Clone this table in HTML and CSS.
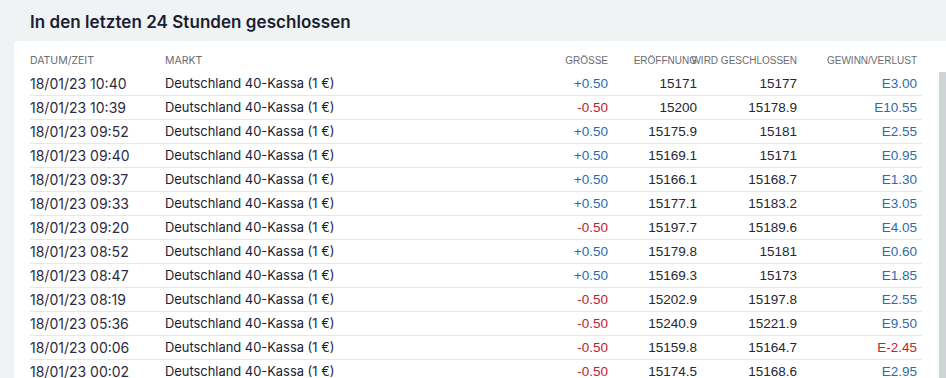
FILE: index.html
```html
<!DOCTYPE html>
<html lang="de">
<head>
<meta charset="utf-8">
<title>In den letzten 24 Stunden geschlossen</title>
<link rel="stylesheet" href="styles.css">
</head>
<body>
<h1 class="title">In den letzten 24 Stunden geschlossen</h1>
<section class="card">
  <div class="table">
    <div class="row head">
      <div class="cell text">DATUM/ZEIT</div>
      <div class="cell text">MARKT</div>
      <div class="cell num">GRÖSSE</div>
      <div class="cell num">ERÖFFNUNG</div>
      <div class="cell num">WIRD GESCHLOSSEN</div>
      <div class="cell num">GEWINN/VERLUST</div>
    </div>
    <div class="row"><div class="cell date">18/01/23 10:40</div><div class="cell market">Deutschland 40-Kassa (1 €)</div><div class="cell num pos">+0.50</div><div class="cell num">15171</div><div class="cell num">15177</div><div class="cell num pos">E3.00</div></div>
    <div class="row"><div class="cell date">18/01/23 10:39</div><div class="cell market">Deutschland 40-Kassa (1 €)</div><div class="cell num neg">-0.50</div><div class="cell num">15200</div><div class="cell num">15178.9</div><div class="cell num pos">E10.55</div></div>
    <div class="row"><div class="cell date">18/01/23 09:52</div><div class="cell market">Deutschland 40-Kassa (1 €)</div><div class="cell num pos">+0.50</div><div class="cell num">15175.9</div><div class="cell num">15181</div><div class="cell num pos">E2.55</div></div>
    <div class="row"><div class="cell date">18/01/23 09:40</div><div class="cell market">Deutschland 40-Kassa (1 €)</div><div class="cell num pos">+0.50</div><div class="cell num">15169.1</div><div class="cell num">15171</div><div class="cell num pos">E0.95</div></div>
    <div class="row"><div class="cell date">18/01/23 09:37</div><div class="cell market">Deutschland 40-Kassa (1 €)</div><div class="cell num pos">+0.50</div><div class="cell num">15166.1</div><div class="cell num">15168.7</div><div class="cell num pos">E1.30</div></div>
    <div class="row"><div class="cell date">18/01/23 09:33</div><div class="cell market">Deutschland 40-Kassa (1 €)</div><div class="cell num pos">+0.50</div><div class="cell num">15177.1</div><div class="cell num">15183.2</div><div class="cell num pos">E3.05</div></div>
    <div class="row"><div class="cell date">18/01/23 09:20</div><div class="cell market">Deutschland 40-Kassa (1 €)</div><div class="cell num neg">-0.50</div><div class="cell num">15197.7</div><div class="cell num">15189.6</div><div class="cell num pos">E4.05</div></div>
    <div class="row"><div class="cell date">18/01/23 08:52</div><div class="cell market">Deutschland 40-Kassa (1 €)</div><div class="cell num pos">+0.50</div><div class="cell num">15179.8</div><div class="cell num">15181</div><div class="cell num pos">E0.60</div></div>
    <div class="row"><div class="cell date">18/01/23 08:47</div><div class="cell market">Deutschland 40-Kassa (1 €)</div><div class="cell num pos">+0.50</div><div class="cell num">15169.3</div><div class="cell num">15173</div><div class="cell num pos">E1.85</div></div>
    <div class="row"><div class="cell date">18/01/23 08:19</div><div class="cell market">Deutschland 40-Kassa (1 €)</div><div class="cell num neg">-0.50</div><div class="cell num">15202.9</div><div class="cell num">15197.8</div><div class="cell num pos">E2.55</div></div>
    <div class="row"><div class="cell date">18/01/23 05:36</div><div class="cell market">Deutschland 40-Kassa (1 €)</div><div class="cell num neg">-0.50</div><div class="cell num">15240.9</div><div class="cell num">15221.9</div><div class="cell num pos">E9.50</div></div>
    <div class="row"><div class="cell date">18/01/23 00:06</div><div class="cell market">Deutschland 40-Kassa (1 €)</div><div class="cell num neg">-0.50</div><div class="cell num">15159.8</div><div class="cell num">15164.7</div><div class="cell num neg">E-2.45</div></div>
    <div class="row"><div class="cell date">18/01/23 00:02</div><div class="cell market">Deutschland 40-Kassa (1 €)</div><div class="cell num neg">-0.50</div><div class="cell num">15174.5</div><div class="cell num">15168.6</div><div class="cell num pos">E2.95</div></div>
  </div>
  <div class="scroll-thumb"></div>
</section>
</body>
</html>
```
FILE: styles.css
```css
html, body {
  margin: 0;
  padding: 0;
  height: 100%;
  overflow: hidden;
  background: #eff3f4;
}
body {
  font-family: Inter, "Liberation Sans", sans-serif;
  color: #1c1f33;
}
.title {
  margin: 0;
  padding: 12px 0 0 30px;
  height: 29px;
  font-size: 17px;
  line-height: 20px;
  font-weight: 600;
  letter-spacing: 0.05px;
  color: #1a1d33;
}
.card {
  position: relative;
  margin-left: 14px;
  height: calc(100% - 41px);
  overflow: hidden;
  background: #ffffff;
  border-top-left-radius: 4px;
  padding: 8px 24px 0 16px;
  box-sizing: border-box;
}
.table {
  display: flex;
  flex-direction: column;
}
.row {
  display: grid;
  grid-template-columns: 135px 1fr 60px 89px 100px 120px;
  padding-right: 5px;
  height: 23px;
  flex: none;
  border-bottom: 1px solid #e4e9ea;
  align-items: center;
}
.row.head {
  border-bottom: none;
}
.cell {
  white-space: nowrap;
  font-size: 13px;
}
.head .cell {
  font-size: 10px;
  color: #6b6b72;
}
.head .cell.num {
  font-family: "Liberation Sans", Arial, sans-serif;
}
.head .cell.text {
  font-family: Inter, sans-serif;
  font-size: 10.5px;
}
.date {
  color: #2e2b3f;
  font-size: 14px;
}
.market {
  color: #1b1d33;
  font-size: 12.9px;
}
.num {
  display: flex;
  justify-content: flex-end;
  font-family: "Liberation Sans", Arial, sans-serif;
  font-size: 13.5px;
  color: #262633;
}
.num.pos {
  color: #2b6cb0;
}
.num.neg {
  color: #c8202f;
}
.scroll-thumb {
  position: absolute;
  right: 0;
  top: 31px;
  bottom: 0;
  width: 7px;
  background: #cdd5d6;
}
```
